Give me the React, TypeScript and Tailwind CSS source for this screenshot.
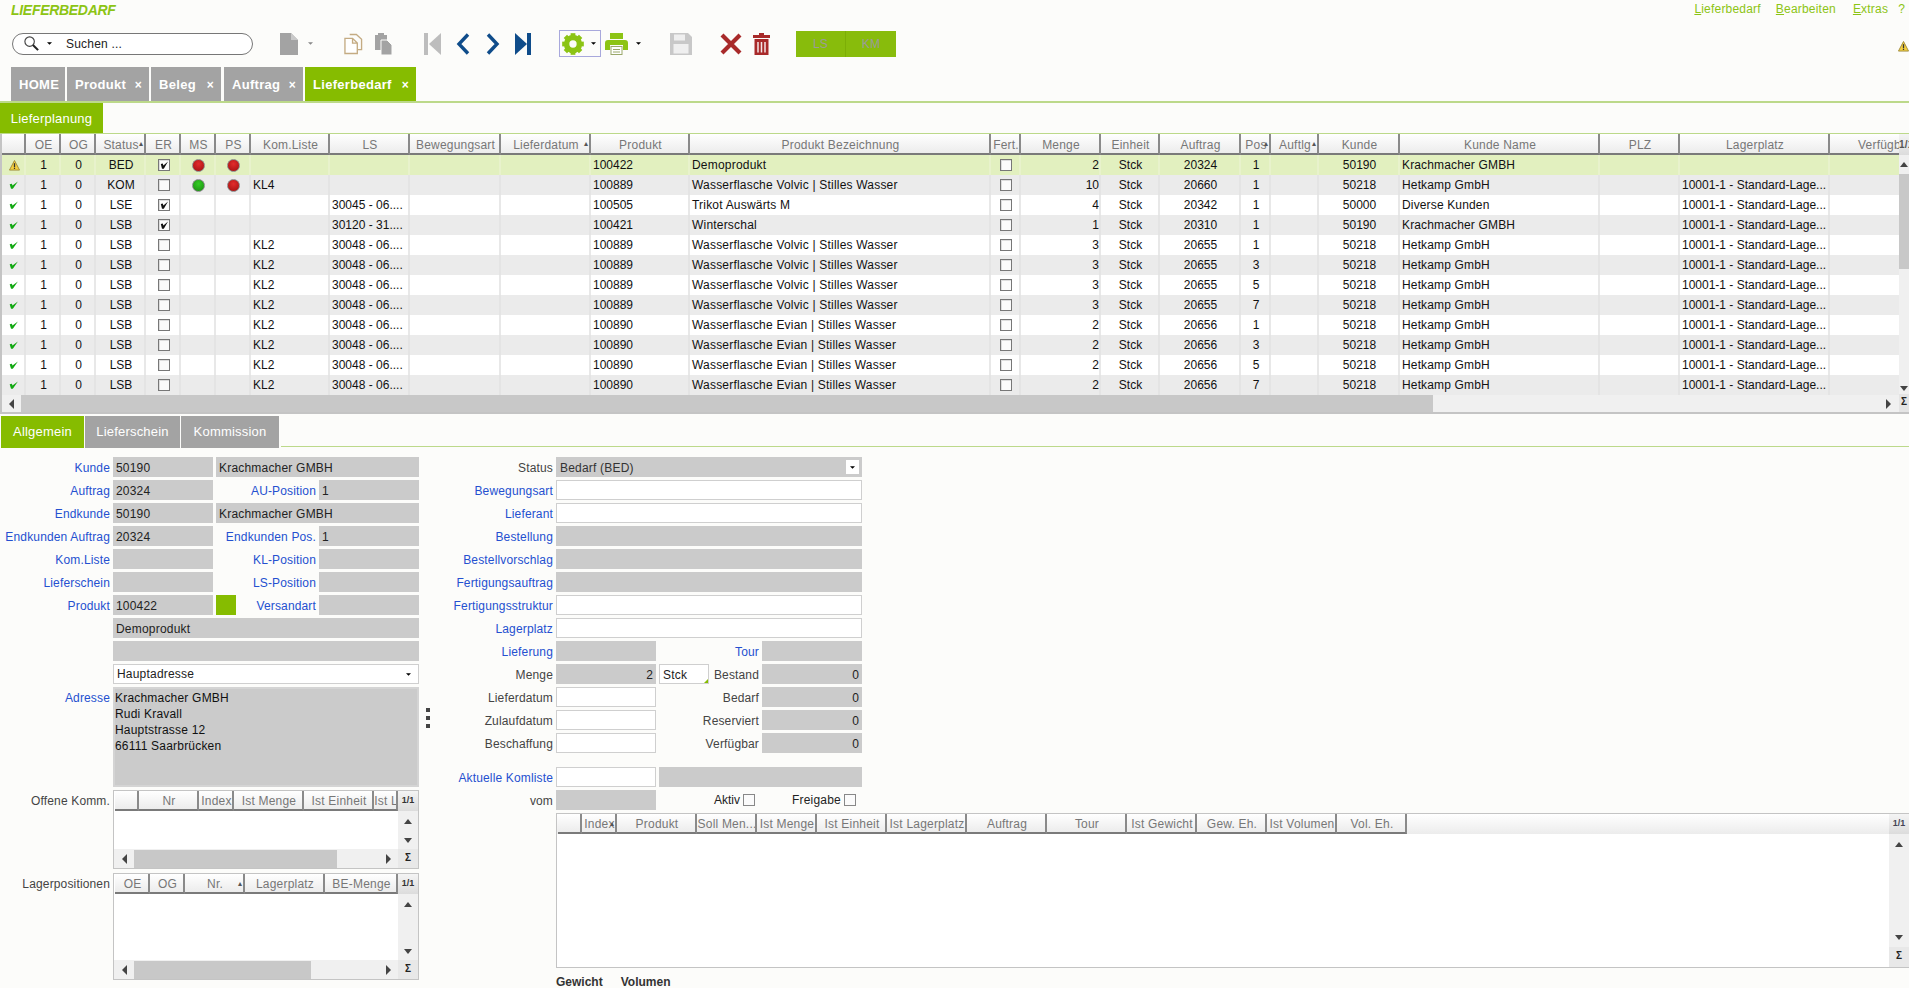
import React from 'react';

const GREEN = 'bg-[#86bc00]';

type Row = {
  ok: boolean; st: string; er: boolean; ms?: 'r' | 'g'; ps?: boolean; kl?: string; ls?: string;
  prod: string; name: string; menge: string; auf: string; pos: string; ku: string; kname: string; lp?: string;
};

const LAGER = '10001-1 - Standard-Lage...';
const VOLVIC = 'Wasserflasche Volvic | Stilles Wasser';
const EVIAN = 'Wasserflasche Evian | Stilles Wasser';

const rows: Row[] = [
  { ok: false, st: 'BED', er: true, ms: 'r', ps: true, prod: '100422', name: 'Demoprodukt', menge: '2', auf: '20324', pos: '1', ku: '50190', kname: 'Krachmacher GMBH' },
  { ok: true, st: 'KOM', er: false, ms: 'g', ps: true, kl: 'KL4', prod: '100889', name: VOLVIC, menge: '10', auf: '20660', pos: '1', ku: '50218', kname: 'Hetkamp GmbH', lp: LAGER },
  { ok: true, st: 'LSE', er: true, ls: '30045 - 06....', prod: '100505', name: 'Trikot Auswärts M', menge: '4', auf: '20342', pos: '1', ku: '50000', kname: 'Diverse Kunden', lp: LAGER },
  { ok: true, st: 'LSB', er: true, ls: '30120 - 31....', prod: '100421', name: 'Winterschal', menge: '1', auf: '20310', pos: '1', ku: '50190', kname: 'Krachmacher GMBH', lp: LAGER },
  ...['1', '3', '5', '7'].map((pos) => ({ ok: true, st: 'LSB', er: false, kl: 'KL2', ls: '30048 - 06....', prod: '100889', name: VOLVIC, menge: '3', auf: '20655', pos, ku: '50218', kname: 'Hetkamp GmbH', lp: LAGER })),
  ...['1', '3', '5', '7'].map((pos) => ({ ok: true, st: 'LSB', er: false, kl: 'KL2', ls: '30048 - 06....', prod: '100890', name: EVIAN, menge: '2', auf: '20656', pos, ku: '50218', kname: 'Hetkamp GmbH', lp: LAGER })),
];

// main grid column widths, first column starts after the 2px left border
const cols: { t: string; w: number; sort?: boolean }[] = [
  { t: '', w: 24 }, { t: 'OE', w: 35 }, { t: 'OG', w: 35 }, { t: 'Status', w: 50, sort: true }, { t: 'ER', w: 35 },
  { t: 'MS', w: 35 }, { t: 'PS', w: 35 }, { t: 'Kom.Liste', w: 79 }, { t: 'LS', w: 80 }, { t: 'Bewegungsart', w: 91 },
  { t: 'Lieferdatum', w: 90, sort: true }, { t: 'Produkt', w: 99 }, { t: 'Produkt Bezeichnung', w: 301 }, { t: 'Fert.', w: 30 },
  { t: 'Menge', w: 80 }, { t: 'Einheit', w: 59 }, { t: 'Auftrag', w: 81 }, { t: 'Pos', w: 30, sort: true }, { t: 'Auftlg', w: 48, sort: true },
  { t: 'Kunde', w: 81 }, { t: 'Kunde Name', w: 200 }, { t: 'PLZ', w: 80 }, { t: 'Lagerplatz', w: 150 }, { t: 'Verfügbar', w: 110 },
];

function Caret({ up, down, left, right, cls = 'text-[#444]' }: { up?: boolean; down?: boolean; left?: boolean; right?: boolean; cls?: string }) {
  const pts = up ? '0,5 4,0 8,5' : down ? '0,0 8,0 4,5' : left ? '5,0 5,10 0,5' : right ? '0,0 5,5 0,10' : '';
  const size = left || right ? 'w-[5px] h-[10px]' : 'w-[8px] h-[5px]';
  const vb = left || right ? '0 0 5 10' : '0 0 8 5';
  return (
    <svg viewBox={vb} className={`${size} ${cls} shrink-0`}>
      <polygon points={pts} fill="currentColor" />
    </svg>
  );
}

function TinyDrop({ cls = 'text-black' }: { cls?: string }) {
  return (
    <svg viewBox="0 0 6 3" className={`w-[5px] h-[3px] ${cls} shrink-0`}>
      <polygon points="0,0 6,0 3,3" fill="currentColor" />
    </svg>
  );
}

function Warn({ size = 11 }: { size?: number }) {
  return (
    <svg viewBox="0 0 12 12" width={size} height={size}>
      <polygon points="6,0.5 11.5,11 0.5,11" fill="#f3cf3f" stroke="#a08a3a" strokeWidth="1" />
      <rect x="5.3" y="3.5" width="1.4" height="4.2" fill="#333" />
      <rect x="5.3" y="8.4" width="1.4" height="1.4" fill="#333" />
    </svg>
  );
}

function Tick() {
  return (
    <svg viewBox="0 0 8 7" className="w-[9px] h-[8px] -ml-[2px]">
      <path d="M0.6 2.8 L1.8 6.8 L3.4 6.8 L7.9 0.4 L3.1 4 L2.6 2.4 Z" fill="#12a812" />
    </svg>
  );
}

function Check({ on }: { on: boolean }) {
  return (
    <div className="w-[12px] h-[12px] border border-[#777] bg-[#fbfbfb] shadow-[inset_1px_1px_0_#ddd] flex items-center justify-center">
      {on && (
        <svg viewBox="0 0 10 10" className="w-[10px] h-[10px]">
          <path d="M1.8 4 L3 8.8 L4.8 8.8 L9 1.4 L4.4 5.4 L3.8 3.4 Z" fill="#111" />
        </svg>
      )}
    </div>
  );
}

function Led({ c }: { c: 'r' | 'g' }) {
  return (
    <div
      className={
        c === 'r'
          ? 'w-[13px] h-[13px] rounded-full border border-[#8a8a8a] bg-[radial-gradient(circle_at_50%_35%,#e22c2c,#a01010)]'
          : 'w-[13px] h-[13px] rounded-full border border-[#8a8a8a] bg-[radial-gradient(circle_at_50%_35%,#33cc22,#1a8a12)]'
      }
    />
  );
}

function HeadCell({ t, w, sort }: { t: string; w: number; sort?: boolean }) {
  return (
    <div
      style={{ width: w }}
      className="relative shrink-0 h-full flex items-center justify-center overflow-hidden whitespace-nowrap text-[12px] text-[#777] pt-[2px] pl-[2px] bg-gradient-to-b from-white to-[#ececec] border-b-2 border-b-[#7a7a7a] border-r-2 border-r-[#8a8a8a]"
    >
      {t}
      {sort && <span className="absolute right-[1px] top-[4px] text-[8px] text-[#555]">▴</span>}
    </div>
  );
}

function Cell({ w, bg, align = 'center', children }: { w: number; bg: string; align?: 'left' | 'center' | 'right'; children?: React.ReactNode }) {
  const a = align === 'center' ? 'justify-center pl-[2px]' : align === 'right' ? 'justify-end' : 'justify-start pl-[2px]';
  return (
    <div style={{ width: w }} className={`shrink-0 h-full flex items-center overflow-hidden whitespace-nowrap border-r-2 ${bg} ${a}`}>
      {children}
    </div>
  );
}

function MainGrid() {
  return (
    <div className="h-[280px] border-l-2 border-b-2 border-[#c4c4c4] flex">
      <div className="w-[1897px] shrink-0 flex flex-col overflow-hidden">
        <div className="flex h-[21px] shrink-0">
          {cols.map((c) => (
            <HeadCell key={c.t + c.w} t={c.t} w={c.w} sort={c.sort} />
          ))}
        </div>
        {rows.map((r, i) => {
          const bg = i === 0 ? 'bg-[#e2f0bf] border-r-[#e8f2cc]' : i % 2 === 1 ? 'bg-[#ebebeb] border-r-[#e4e4e4]' : 'bg-white border-r-[#e8e8e8]';
          const w = cols.map((c) => c.w);
          return (
            <div key={i} className="flex h-[20px] shrink-0 text-[12px] text-[#111] tracking-normal">
              <Cell w={w[0]} bg={bg}>{r.ok ? <Tick /> : <Warn />}</Cell>
              <Cell w={w[1]} bg={bg}>1</Cell>
              <Cell w={w[2]} bg={bg}>0</Cell>
              <Cell w={w[3]} bg={bg}>{r.st}</Cell>
              <Cell w={w[4]} bg={bg}><Check on={r.er} /></Cell>
              <Cell w={w[5]} bg={bg}>{r.ms && <Led c={r.ms} />}</Cell>
              <Cell w={w[6]} bg={bg}>{r.ps && <Led c="r" />}</Cell>
              <Cell w={w[7]} bg={bg} align="left">{r.kl}</Cell>
              <Cell w={w[8]} bg={bg} align="left">{r.ls}</Cell>
              <Cell w={w[9]} bg={bg} />
              <Cell w={w[10]} bg={bg} />
              <Cell w={w[11]} bg={bg} align="left">{r.prod}</Cell>
              <Cell w={w[12]} bg={bg} align="left"><span className="tracking-[0.2px]">{r.name}</span></Cell>
              <Cell w={w[13]} bg={bg}><Check on={false} /></Cell>
              <Cell w={w[14]} bg={bg} align="right">{r.menge}</Cell>
              <Cell w={w[15]} bg={bg}>Stck</Cell>
              <Cell w={w[16]} bg={bg}>{r.auf}</Cell>
              <Cell w={w[17]} bg={bg}>{r.pos}</Cell>
              <Cell w={w[18]} bg={bg} />
              <Cell w={w[19]} bg={bg}>{r.ku}</Cell>
              <Cell w={w[20]} bg={bg} align="left"><span className="tracking-[0.15px]">{r.kname}</span></Cell>
              <Cell w={w[21]} bg={bg} />
              <Cell w={w[22]} bg={bg} align="left">{r.lp}</Cell>
              <Cell w={w[23]} bg={bg} />
            </div>
          );
        })}
        <div className="h-[18px] shrink-0 bg-[#f0f0f0] flex items-center">
          <div className="w-[19px] flex justify-center"><Caret left /></div>
          <div className="w-[1412px] h-full bg-[#c8c8c8]" />
          <div className="flex-1" />
          <div className="w-[22px] flex justify-center"><Caret right /></div>
        </div>
      </div>
      <div className="flex-1 flex flex-col items-center bg-[#f0f0f0] overflow-hidden">
        <div className="h-[21px] w-full bg-gradient-to-b from-[#f4f4f4] to-[#dcdcdc] text-[10px] font-bold text-[#555] overflow-hidden whitespace-nowrap pt-[3px]">1/1</div>
        <div className="h-[19px] flex items-center"><Caret up /></div>
        <div className="w-full h-[95px] bg-[#c8c8c8]" />
        <div className="flex-1 flex items-end pb-[3px]"><Caret down /></div>
        <div className="h-[18px] w-full bg-[#e4e4e4] text-[10px] font-bold text-center text-[#222] overflow-hidden">Σ</div>
      </div>
    </div>
  );
}

function Label({ w, dark, children }: { w: number; dark?: boolean; children?: React.ReactNode }) {
  return (
    <div style={{ width: w }} className={`shrink-0 text-right whitespace-nowrap pr-[3px] h-[20px] leading-[22px] tracking-[0.15px] ${dark ? 'text-[#444]' : 'text-[#2450d0]'}`}>
      {children}
    </div>
  );
}

function Field({ w, white, right, children }: { w: number; white?: boolean; right?: boolean; children?: React.ReactNode }) {
  return (
    <div
      style={{ width: w }}
      className={`h-[20px] shrink-0 whitespace-nowrap text-[#222] ${white ? 'bg-white border border-[#cfcfcf] leading-[20px]' : 'bg-[#cbcbcb] leading-[22px]'} ${right ? 'text-right pr-[3px]' : 'pl-[3px]'}`}
    >
      {children}
    </div>
  );
}

function SubGrid({ label, h, thumb, cols }: { label: string; h: number; thumb: number; cols: { t: string; w: number; sort?: boolean }[] }) {
  return (
    <div className="flex">
      <div className="w-[113px] shrink-0 text-right pr-[3px] pt-[2px] text-[#444] whitespace-nowrap leading-[18px] tracking-[0.15px]">{label}</div>
      <div style={{ height: h }} className="w-[306px] border border-[#c4c4c4] flex overflow-hidden bg-white">
        <div className="w-[284px] shrink-0 flex flex-col">
          <div className="flex h-[20px] shrink-0 pl-[1px] overflow-hidden">
            {cols.map((c) => (
              <HeadCell key={c.t + c.w} t={c.t} w={c.w} sort={c.sort} />
            ))}
          </div>
          <div className="flex-1" />
          <div className="h-[19px] shrink-0 bg-[#f0f0f0] flex items-center">
            <div className="w-[20px] flex justify-center"><Caret left /></div>
            <div style={{ width: thumb }} className="h-[18px] bg-[#c8c8c8]" />
            <div className="flex-1" />
            <div className="w-[20px] flex justify-center"><Caret right /></div>
          </div>
        </div>
        <div className="flex-1 flex flex-col items-center bg-[#f0f0f0]">
          <div className="h-[20px] w-full bg-gradient-to-b from-[#f4f4f4] to-[#dcdcdc] text-[9px] font-bold text-center text-[#333] leading-[18px] tracking-normal">1/1</div>
          <div className="h-[20px] flex items-center"><Caret up /></div>
          <div className="flex-1 flex items-end pb-[6px]"><Caret down /></div>
          <div className="h-[19px] w-full bg-[#e8e8e8] text-[10px] font-bold text-center text-[#222] leading-[18px]">Σ</div>
        </div>
      </div>
    </div>
  );
}

function LeftForm() {
  const top: [string, string, string?, string?][] = [
    ['Kunde', '50190', '', 'Krachmacher GMBH'],
    ['Auftrag', '20324', 'AU-Position', '1'],
    ['Endkunde', '50190', '', 'Krachmacher GMBH'],
    ['Endkunden Auftrag', '20324', 'Endkunden Pos.', '1'],
    ['Kom.Liste', '', 'KL-Position', ''],
    ['Lieferschein', '', 'LS-Position', ''],
  ];
  return (
    <div className="w-[419px] shrink-0 flex flex-col gap-[3px] text-[12px]">
      {top.map(([a, b, c, d]) => (
        <div key={a} className="flex">
          <Label w={113}>{a}</Label>
          <Field w={100}>{b}</Field>
          {c ? (
            <>
              <Label w={106}>{c}</Label>
              <Field w={100}>{d}</Field>
            </>
          ) : (
            <div className="ml-[3px]"><Field w={203}>{d}</Field></div>
          )}
        </div>
      ))}
      <div className="flex">
        <Label w={113}>Produkt</Label>
        <Field w={100}>100422</Field>
        <div className={`ml-[3px] w-[20px] h-[20px] ${GREEN}`} />
        <Label w={83}>Versandart</Label>
        <Field w={100} />
      </div>
      <div className="flex pl-[113px]"><Field w={306}>Demoprodukt</Field></div>
      <div className="flex pl-[113px]"><Field w={306} /></div>
      <div className="flex pl-[113px]">
        <div className="w-[306px] h-[20px] bg-white border border-[#cfcfcf] pl-[3px] leading-[20px] flex items-center justify-between pr-[7px] text-[#222]">
          Hauptadresse
          <TinyDrop />
        </div>
      </div>
      <div className="flex">
        <Label w={113}>Adresse</Label>
        <div className="w-[306px] h-[100px] bg-[#cbcbcb] border-2 border-[#d4d4d4] leading-[16px] text-[#111] pt-[1px]">
          Krachmacher GMBH<br />Rudi Kravall<br />Hauptstrasse 12<br />66111 Saarbrücken
        </div>
      </div>
      <SubGrid
        label="Offene Komm."
        h={79}
        thumb={203}
        cols={[
          { t: '', w: 24 }, { t: 'Nr', w: 60 }, { t: 'Index', w: 35 }, { t: 'Ist Menge', w: 70 }, { t: 'Ist Einheit', w: 70 }, { t: 'Ist L', w: 24 },
        ]}
      />
      <div className="mt-[1px]">
        <SubGrid
          label="Lagerpositionen"
          h={107}
          thumb={177}
          cols={[
            { t: 'OE', w: 35 }, { t: 'OG', w: 35 }, { t: 'Nr.', w: 60, sort: true }, { t: 'Lagerplatz', w: 80 }, { t: 'BE-Menge', w: 73 },
          ]}
        />
      </div>
    </div>
  );
}

function RightForm() {
  const wide: [string, 'w' | 'g'][] = [
    ['Bewegungsart', 'w'], ['Lieferant', 'w'], ['Bestellung', 'g'], ['Bestellvorschlag', 'g'],
    ['Fertigungsauftrag', 'g'], ['Fertigungsstruktur', 'w'], ['Lagerplatz', 'w'],
  ];
  const gridCols = [
    { t: '', w: 24 }, { t: 'Index', w: 35, sort: true }, { t: 'Produkt', w: 80 }, { t: 'Soll Men...', w: 60 }, { t: 'Ist Menge', w: 60 },
    { t: 'Ist Einheit', w: 70 }, { t: 'Ist Lagerplatz', w: 80 }, { t: 'Auftrag', w: 80 }, { t: 'Tour', w: 80 }, { t: 'Ist Gewicht', w: 70 },
    { t: 'Gew. Eh.', w: 70 }, { t: 'Ist Volumen', w: 70 }, { t: 'Vol. Eh.', w: 70 },
  ];
  return (
    <div className="flex-1 flex flex-col gap-[3px] text-[12px]">
      <div className="flex">
        <Label w={116} dark>Status</Label>
        <div className="w-[306px] h-[20px] bg-[#cbcbcb] pl-[4px] pr-[3px] leading-[22px] text-[#333] flex items-center justify-between">
          <span className="pt-[1px]">Bedarf (BED)</span>
          <div className="w-[13px] h-[14px] bg-white flex items-center justify-center"><TinyDrop /></div>
        </div>
      </div>
      {wide.map(([l, k]) => (
        <div key={l} className="flex">
          <Label w={116}>{l}</Label>
          <Field w={306} white={k === 'w'} />
        </div>
      ))}
      <div className="flex">
        <Label w={116}>Lieferung</Label>
        <Field w={100} />
        <Label w={106}>Tour</Label>
        <Field w={100} />
      </div>
      <div className="flex">
        <Label w={116} dark>Menge</Label>
        <Field w={100} right>2</Field>
        <div className="ml-[3px] relative">
          <Field w={50} white>Stck</Field>
          <div className="absolute right-[1px] bottom-[1px] w-0 h-0 border-l-[4px] border-l-transparent border-b-[4px] border-b-[#86bc00]" />
        </div>
        <Label w={53} dark>Bestand</Label>
        <Field w={100} right>0</Field>
      </div>
      {[['Lieferdatum', 'Bedarf'], ['Zulaufdatum', 'Reserviert'], ['Beschaffung', 'Verfügbar']].map(([a, b]) => (
        <div key={a} className="flex">
          <Label w={116} dark>{a}</Label>
          <Field w={100} white />
          <Label w={106} dark>{b}</Label>
          <Field w={100} right>0</Field>
        </div>
      ))}
      <div className="flex mt-[11px]">
        <Label w={116}>Aktuelle Komliste</Label>
        <Field w={100} white />
        <div className="ml-[3px]"><Field w={203} /></div>
      </div>
      <div className="flex items-center">
        <Label w={116} dark>vom</Label>
        <Field w={100} />
        <div className="ml-[58px] text-[#222] tracking-normal">Aktiv</div>
        <div className="ml-[3px] w-[12px] h-[12px] border border-[#888] bg-[#fbfbfb]" />
        <div className="ml-[37px] text-[#222]">Freigabe</div>
        <div className="ml-[3px] w-[12px] h-[12px] border border-[#888] bg-[#fbfbfb]" />
      </div>
      <div className="ml-[116px] h-[155px] border-y border-l border-[#c4c4c4] flex bg-white">
        <div className="flex-1 flex flex-col overflow-hidden">
          <div className="flex h-[20px] shrink-0 pl-[1px] bg-gradient-to-b from-white to-[#ececec]">
            {gridCols.map((c) => (
              <HeadCell key={c.t + c.w} t={c.t} w={c.w} sort={c.sort} />
            ))}
          </div>
        </div>
        <div className="w-[20px] shrink-0 flex flex-col items-center bg-[#f0f0f0]">
          <div className="h-[20px] w-full bg-gradient-to-b from-[#f4f4f4] to-[#dcdcdc] text-[9px] font-bold text-center text-[#445] leading-[18px] tracking-normal">1/1</div>
          <div className="h-[20px] flex items-center"><Caret up /></div>
          <div className="flex-1 flex items-end pb-[7px]"><Caret down /></div>
          <div className="h-[20px] w-full bg-[#e8e8e8] text-[10px] font-bold text-center text-[#222] leading-[18px]">Σ</div>
        </div>
      </div>
      <div className="ml-[116px] mt-[2px] flex gap-[18px] font-bold text-[#333] text-[12px] tracking-normal">
        <span>Gewicht</span>
        <span>Volumen</span>
      </div>
    </div>
  );
}

function Gear() {
  return (
    <svg viewBox="0 0 24 24" className="w-[22px] h-[22px]">
      <circle cx="12" cy="12" r="7" fill="none" stroke="#8cc414" strokeWidth="6" />
      {[0, 45, 90, 135, 180, 225, 270, 315].map((a) => (
        <rect key={a} x="9.4" y="0.2" width="5.2" height="5" fill="#8cc414" transform={`rotate(${a} 12 12)`} />
      ))}
    </svg>
  );
}

function Toolbar() {
  return (
    <div className="h-[27px] flex items-center pl-[12px]">
      <div className="w-[241px] h-[22px] rounded-full border border-[#777] bg-white flex items-center text-[12px] text-[#222] pl-[10px] shrink-0">
        <svg viewBox="0 0 18 18" className="w-[17px] h-[17px]">
          <circle cx="7" cy="7" r="5" fill="#fff" stroke="#444" strokeWidth="1.2" />
          <path d="M10.5 10.5 L16 16" stroke="#222" strokeWidth="2.2" />
        </svg>
        <div className="ml-[7px]"><TinyDrop /></div>
        <span className="ml-[14px] pt-[1px]">Suchen ...</span>
      </div>
      {/* document */}
      <svg viewBox="0 0 18 22" className="ml-[27px] w-[18px] h-[22px]">
        <path d="M0 0 H11 L18 7 V22 H0 Z" fill="#a3a3a3" />
        <path d="M11 0 L18 7 H11 Z" fill="#c9c9c9" />
      </svg>
      <div className="ml-[10px]"><TinyDrop cls="text-[#888]" /></div>
      {/* copy */}
      <svg viewBox="0 0 20 22" className="ml-[31px] w-[19px] h-[22px]">
        <path d="M6 1 H13 L18.5 6 V17 H14" fill="none" stroke="#c4ab82" strokeWidth="1.4" />
        <path d="M1 5 H9 L14 10 V21 H1 Z M9 5 V10 H14" fill="#fff" stroke="#c4ab82" strokeWidth="1.4" />
      </svg>
      {/* paste */}
      <svg viewBox="0 0 17 22" className="ml-[12px] w-[17px] h-[22px]">
        <path d="M3 0 H9 V2 H12 V17 H0 V2 H3 Z" fill="#a3a3a3" />
        <path d="M6 7 H12 L17 12 V22 H6 Z" fill="#a3a3a3" stroke="#fcfcfa" strokeWidth="1" />
      </svg>
      {/* first / prev / next / last */}
      <svg viewBox="0 0 17 22" className="ml-[32px] w-[17px] h-[22px]">
        <rect x="0" y="0" width="4" height="22" fill="#bdbdbd" />
        <polygon points="17,0 17,22 5,11" fill="#bdbdbd" />
      </svg>
      <svg viewBox="0 0 14 22" className="ml-[15px] w-[14px] h-[22px]">
        <path d="M12 1.5 L3 11 L12 20.5" fill="none" stroke="#0f4c8a" strokeWidth="3.4" />
      </svg>
      <svg viewBox="0 0 14 22" className="ml-[16px] w-[14px] h-[22px]">
        <path d="M2 1.5 L11 11 L2 20.5" fill="none" stroke="#0f4c8a" strokeWidth="3.4" />
      </svg>
      <svg viewBox="0 0 16 22" className="ml-[15px] w-[16px] h-[22px]">
        <polygon points="0,0 0,22 12,11" fill="#0f4c8a" />
        <rect x="12" y="0" width="4" height="22" fill="#0f4c8a" />
      </svg>
      {/* settings */}
      <div className="ml-[28px] w-[42px] h-[27px] border border-[#a8a8dc] flex items-center pl-[2px]">
        <Gear />
        <div className="ml-[7px]"><TinyDrop /></div>
      </div>
      {/* printer */}
      <svg viewBox="0 0 23 22" className="ml-[4px] w-[23px] h-[22px]">
        <rect x="5" y="0" width="13" height="6" fill="#8cc414" />
        <path d="M3 7 H20 Q23 7 23 10 V17 H18 V12 H5 V17 H0 V10 Q0 7 3 7 Z" fill="#8cc414" />
        <rect x="6" y="13.5" width="11" height="8" fill="#fff" stroke="#9aa86a" />
        <path d="M8 16.5 H15 M8 19 H15" stroke="#9aa86a" />
      </svg>
      <div className="ml-[8px]"><TinyDrop /></div>
      {/* save */}
      <svg viewBox="0 0 22 22" className="ml-[29px] w-[22px] h-[22px]">
        <path d="M0 0 H18 L22 4 V22 H0 Z" fill="#c8c8c8" />
        <rect x="4" y="1.5" width="11" height="6" fill="#efefef" />
        <rect x="3.5" y="11" width="15" height="9.5" fill="#efefef" />
      </svg>
      {/* cancel / delete */}
      <svg viewBox="0 0 22 22" className="ml-[28px] w-[22px] h-[22px]">
        <path d="M2 2 L20 20 M20 2 L2 20" stroke="#a82a2a" strokeWidth="4.2" />
      </svg>
      <svg viewBox="0 0 17 22" className="ml-[11px] w-[17px] h-[22px]">
        <path d="M6 0 H11 V2 H17 V5 H0 V2 H6 Z" fill="#a82a2a" />
        <path d="M1.5 6 H15.5 V22 H1.5 Z" fill="#a82a2a" />
        <path d="M5 9 V19.5 M8.5 9 V19.5 M12 9 V19.5" stroke="#f4e6e6" strokeWidth="1.5" />
      </svg>
      <div className="ml-[26px] h-[26px] flex text-[12px] text-[#9b9b9b]">
        <div className="w-[50px] bg-[#88bc0c] border-r border-[#7cae06] flex items-center justify-center">LS</div>
        <div className="w-[50px] bg-[#88bc0c] flex items-center justify-center">KM</div>
      </div>
      <div className="flex-1 flex justify-end self-start mt-[11px]"><Warn size={11} /></div>
    </div>
  );
}

function Tab({ w, active, close, cls = '', children }: { w: number; active?: boolean; close?: boolean; cls?: string; children: string }) {
  return (
    <div
      style={{ width: w }}
      className={`h-full shrink-0 flex items-center text-white text-[13px] font-bold pl-[8px] pt-[2px] whitespace-nowrap tracking-[0.3px] ${cls} ${active ? GREEN : 'bg-[#a3a3a3]'}`}
    >
      <span>{children}</span>
      {close && <span className="ml-auto mr-[7px] text-[12px] font-bold leading-none">×</span>}
    </div>
  );
}

export default function App() {
  return (
    <div className="w-[1909px] h-[988px] overflow-hidden bg-[#fcfcfa] flex flex-col font-['Liberation_Sans',Arial,sans-serif] text-[12px] tracking-[0.2px]">
      {/* TITLE + MENU */}
      <div className="h-[30px] shrink-0 flex justify-between pl-[11px] pr-[4px] pt-[2px]">
        <div className="text-[14px] font-bold italic text-[#8cc414] leading-[16px] tracking-[-0.3px]">LIEFERBEDARF</div>
        <div className="flex text-[12px] text-[#8cc414] leading-[14px]">
          <span><u>L</u>ieferbedarf</span>
          <span className="ml-[15px]"><u>B</u>earbeiten</span>
          <span className="ml-[17px]"><u>E</u>xtras</span>
          <span className="ml-[10px]">?</span>
        </div>
      </div>

      <Toolbar />

      {/* MAIN TABS */}
      <div className="h-[34px] shrink-0 flex gap-[2px] pl-[11px] mt-[10px]">
        <Tab w={54}>HOME</Tab>
        <Tab w={82} close>Produkt</Tab>
        <Tab w={70} close>Beleg</Tab>
        <Tab w={79} close cls="ml-[1px]">Auftrag</Tab>
        <Tab w={111} active close>Lieferbedarf</Tab>
      </div>
      <div className="h-[2px] shrink-0 bg-[#bcd98a]" />

      {/* SUB TAB */}
      <div className="h-[30px] shrink-0 flex">
        <div className={`w-[103px] ${GREEN} text-white text-[13px] pt-[1px] flex items-center justify-center`}>Lieferplanung</div>
      </div>
      <div className="h-[1px] shrink-0 bg-[#bcd98a]" />

      <MainGrid />

      {/* DETAIL TABS */}
      <div className="h-[32px] shrink-0 flex items-stretch gap-[1px] pl-[1px] mt-[2px]">
        <div className={`w-[83px] ${GREEN} text-white text-[13px] flex items-center justify-center`}>Allgemein</div>
        <div className="w-[95px] bg-[#a3a3a3] text-white text-[13px] flex items-center justify-center">Lieferschein</div>
        <div className="w-[98px] bg-[#a3a3a3] text-white text-[13px] flex items-center justify-center">Kommission</div>
        <div className="flex-1 border-b border-[#bcd98a] mb-[1px] ml-[1px]" />
      </div>

      {/* FORM */}
      <div className="flex flex-1 pt-[9px]">
        <LeftForm />
        <div className="w-[21px] shrink-0 flex flex-col items-start gap-[4px] pt-[251px] pl-[7px]">
          <div className="w-[4px] h-[4px] bg-[#444]" />
          <div className="w-[4px] h-[4px] bg-[#444]" />
          <div className="w-[4px] h-[4px] bg-[#444]" />
        </div>
        <RightForm />
      </div>
    </div>
  );
}
